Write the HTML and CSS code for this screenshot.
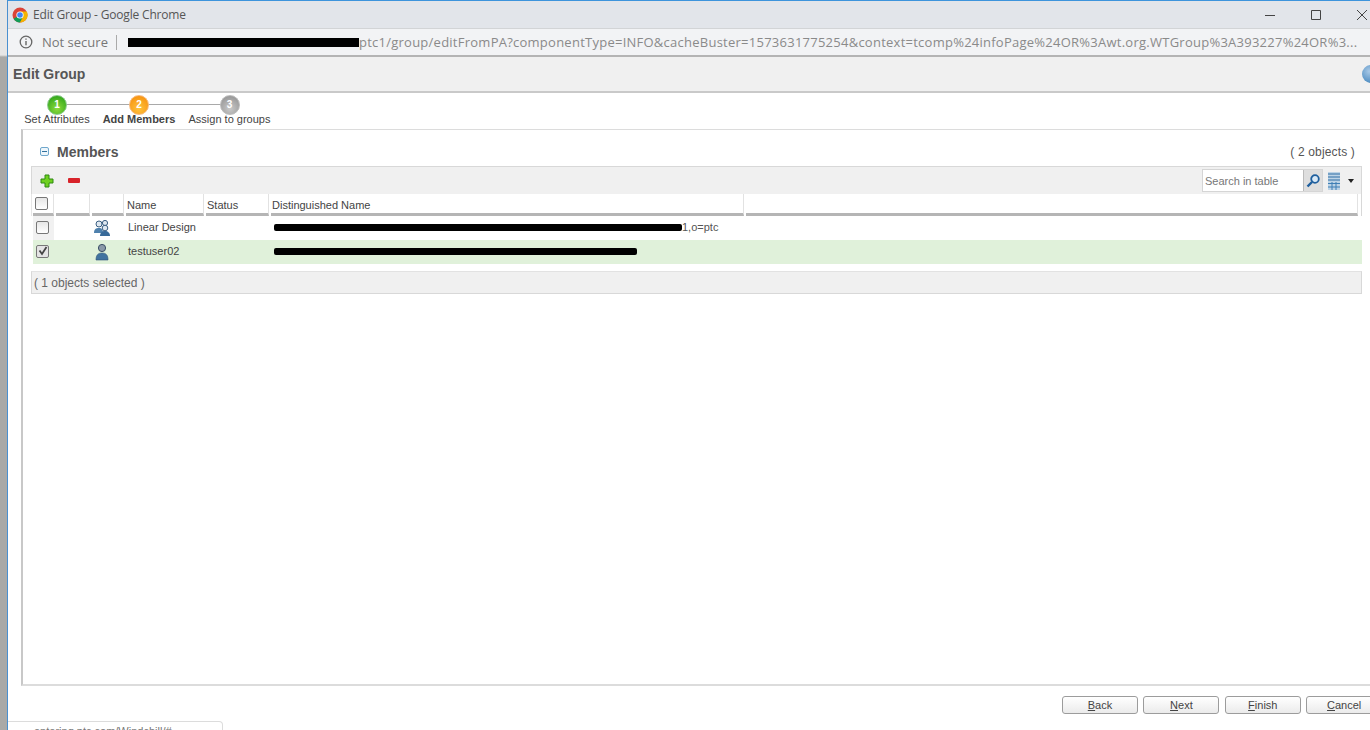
FILE: index.html
```html
<!DOCTYPE html>
<html lang="en">
<head>
<meta charset="utf-8">
<title>Edit Group - Google Chrome</title>
<link rel="stylesheet" href="styles.css">
</head>
<body>
<div class="desk">
  <div class="strip"></div>
  <div class="window">
    <header class="titlebar">
      <svg class="chrome" width="16" height="16" viewBox="0 0 16 16">
        <circle cx="8" cy="8" r="7.5" fill="#db4437"/>
        <path d="M8 8 1.5 11.8A7.5 7.5 0 0 0 8 15.5L11.6 9Z" fill="#0f9d58"/>
        <path d="M8 4.5h6.8A7.5 7.5 0 0 1 8 15.5L11.2 9.6Z" fill="#f4b400"/>
        <circle cx="8" cy="8" r="3.6" fill="#fff"/>
        <circle cx="8" cy="8" r="2.8" fill="#4285f4"/>
      </svg>
      <span class="wintitle">Edit Group - Google Chrome</span>
      <div class="winctrls">
        <svg width="12" height="12" viewBox="0 0 12 12"><path d="M1 6.5h10" stroke="#444" fill="none"/></svg>
        <svg width="12" height="12" viewBox="0 0 12 12"><path d="M1.5 1.5h9v9h-9z" stroke="#444" fill="none"/></svg>
        <svg width="12" height="12" viewBox="0 0 12 12"><path d="M1 1l10 10M11 1 1 11" stroke="#444" fill="none"/></svg>
      </div>
    </header>
    <div class="addrbar">
      <svg class="info" width="14" height="14" viewBox="0 0 14 14"><circle cx="7" cy="7" r="5.8" fill="none" stroke="#666" stroke-width="1.3"/><path d="M7 6v4.2M7 3.6v1.2" stroke="#666" stroke-width="1.4"/></svg>
      <span class="secure">Not secure</span>
      <span class="sep"></span>
      <span class="url"><span class="redact-url"></span><span class="url-text">ptc1/group/editFromPA?componentType=INFO&amp;cacheBuster=1573631775254&amp;context=tcomp%24infoPage%24OR%3Awt.org.WTGroup%3A393227%24OR%3...</span></span>
    </div>
    <div class="pagehead">
      <h1>Edit Group</h1>
      <span class="help"></span>
    </div>
    <nav class="steps">
      <div class="step step1"><span class="dot green">1</span><span class="steplabel">Set Attributes</span></div>
      <div class="step step2"><span class="dot orange">2</span><span class="steplabel current">Add Members</span></div>
      <div class="step step3"><span class="dot grey">3</span><span class="steplabel">Assign to groups</span></div>
      <span class="stepline"></span>
    </nav>
    <main class="panel">
      <div class="panelhead">
        <span class="collapse"></span>
        <h2>Members</h2>
        <span class="count">( 2 objects )</span>
      </div>
      <div class="tablebox">
        <div class="toolbar">
          <svg class="plus" width="14" height="14" viewBox="0 0 14 14"><path d="M5 1h4v4h4v4H9v4H5V9H1V5h4z" fill="#6fd020" stroke="#2f8a12"/></svg>
          <span class="minus"></span>
          <div class="search">
            <span class="searchinput">Search in table</span>
            <span class="searchbtn"><svg width="16" height="16" viewBox="0 0 16 16"><circle cx="10" cy="6" r="3.8" fill="#d9e9f6" stroke="#1f5f9e" stroke-width="1.8"/><path d="M7 9l-4.5 4.5" stroke="#1f5f9e" stroke-width="2.4"/></svg></span>
          </div>
          <svg class="cols" width="12" height="18" viewBox="0 0 12 18"><path d="M0 0h12v18H0z" fill="#bcd3e6"/><path d="M0 2h12M0 5h12M0 8h12" stroke="#2f6ea3" stroke-width="1.2"/><path d="M0 11.5h12M0 15h12M4 10v8M8 10v8" stroke="#3f7fb5"/></svg>
          <span class="caret"></span>
        </div>
        <div class="row headrow">
          <div class="cell c1"><span class="check"></span></div>
          <div class="cell c2"></div>
          <div class="cell c3"></div>
          <div class="cell c4">Name</div>
          <div class="cell c5">Status</div>
          <div class="cell c6">Distinguished Name</div>
          <div class="cell c7"></div>
        </div>
        <div class="row datarow">
          <div class="cell c1 tick"><span class="check"></span></div>
          <div class="cell c2"></div>
          <div class="cell c3">
            <svg width="18" height="18" viewBox="0 0 18 18"><circle cx="6" cy="5" r="3" fill="#dfe8f0" stroke="#3b5f82"/><circle cx="12" cy="4" r="2.6" fill="#dfe8f0" stroke="#3b5f82"/><path d="M1 14c0-4 2-5 5-5s4 2 4 5z" fill="#4f81ad"/><circle cx="12" cy="9" r="2.8" fill="#dfe8f0" stroke="#3b5f82"/><path d="M7 17c0-3 2-5 5-5s5 2 5 5z" fill="#386a99"/></svg>
          </div>
          <div class="cell c4">Linear Design</div>
          <div class="cell c5"></div>
          <div class="cell c6 dn"><span class="redact r1"></span><span>1,o=ptc</span></div>
        </div>
        <div class="row datarow selected">
          <div class="cell c1"><span class="check on"><svg width="10" height="10" viewBox="0 0 10 10"><path d="M1.5 4.5 4 8l4.5-7" fill="none" stroke="#444" stroke-width="1.8"/></svg></span></div>
          <div class="cell c2"></div>
          <div class="cell c3">
            <svg width="14" height="18" viewBox="0 0 14 18"><circle cx="7" cy="5" r="3.6" fill="#8b99a8" stroke="#3b4f66"/><path d="M1 17c0-5 2-7 6-7s6 2 6 7z" fill="#41739f" stroke="#2d5275" stroke-width=".6"/></svg>
          </div>
          <div class="cell c4">testuser02</div>
          <div class="cell c5"></div>
          <div class="cell c6 dn"><span class="redact r2"></span></div>
        </div>
        <div class="tablefoot">( 1 objects selected )</div>
      </div>
    </main>
    <footer class="actions">
      <button class="btn"><u>B</u>ack</button>
      <button class="btn"><u>N</u>ext</button>
      <button class="btn"><u>F</u>inish</button>
      <button class="btn"><u>C</u>ancel</button>
    </footer>
    <div class="statusbubble">entering.ptc.com/Windchill/#</div>
  </div>
</div>
</body>
</html>
```

FILE: styles.css
```css
* { box-sizing: border-box; }
html, body { margin: 0; padding: 0; height: 730px; overflow: hidden; }
body { font-family: "Liberation Sans", Arial, sans-serif; font-size: 11px; color: #333; background: #fff; }
.desk { display: flex; width: 1370px; height: 730px; overflow: hidden; }
.strip { width: 7px; flex: none; background: linear-gradient(#e6e6e6 0, #e6e6e6 55px, #a9a9a7 57px); }
.window { position: relative; flex: 1; min-width: 0; height: 730px; border-left: 1px solid #4a90d0; border-top: 1px solid #3d94dc; background: #fff; }

.titlebar { display: flex; align-items: center; height: 27px; padding-left: 4px; background: #e2e5ea; }
.chrome { flex: none; }
.wintitle { margin-left: 5px; font: 12px "Open Sans", sans-serif; letter-spacing: -.18px; color: #555; }
.winctrls { display: flex; align-items: center; gap: 34px; margin-left: auto; margin-right: 2px; }

.addrbar { display: flex; align-items: center; height: 29px; padding-left: 11px; background: #f2f3f5; border-top: 1px solid #d2d4d6; border-bottom: 2px solid #b4b4b4; white-space: nowrap; overflow: hidden; }
.secure { margin-left: 9px; font: 13px "Open Sans", sans-serif; color: #777; }
.sep { width: 1px; height: 15px; margin: 0 11px 0 8px; background: #aaa; }
.url { display: flex; align-items: center; font: 13px "Open Sans", sans-serif; color: #8a8a8a; }
.redact-url { width: 231px; height: 9px; background: #000; }
.url-text { letter-spacing: .25px; }

.pagehead { display: flex; align-items: center; height: 36px; padding-left: 5px; background: #f0f0f0; border-bottom: 2px solid #c9c9c9; }
.pagehead h1 { margin: 0; font-size: 14px; font-weight: bold; color: #565656; }
.help { width: 18px; height: 18px; margin-left: auto; margin-right: -10px; border-radius: 50%; background: radial-gradient(circle at 40% 35%, #a9c9e6, #2f78b5); }

.steps { position: relative; display: flex; height: 36px; }
.step { display: flex; flex-direction: column; align-items: center; position: relative; z-index: 1; }
.step1 { margin-left: 16px; width: 66px; }
.step2 { margin-left: 13px; width: 72px; }
.step3 { margin-left: 14px; width: 81px; }
.dot { width: 20px; height: 20px; margin-top: 2px; border-radius: 50%; color: #fff; font-size: 10px; font-weight: bold; line-height: 18px; text-align: center; border: 1px solid #bbb; }
.green { background: radial-gradient(circle at 50% 70%, #8ddc3e, #1f9b14); border-color: #8ac98a; }
.orange { background: radial-gradient(circle at 50% 70%, #ffc23d, #f58a07); border-color: #f7b97b; }
.grey { background: radial-gradient(circle at 50% 70%, #c9c9c9, #8c8c8c); }
.steplabel { margin-top: -2px; font-size: 11px; line-height: 13px; white-space: nowrap; color: #444; }
.current { font-weight: bold; }
.stepline { position: absolute; left: 49px; top: 11px; width: 172px; height: 1px; background: #a9a9a9; }

.panel { height: 557px; margin-left: 13px; padding: 0 0 0 8px; border-left: 2px solid #c8c8c8; border-top: 1px solid #dcdcdc; border-bottom: 2px solid #dcdcdc; }
.panelhead { display: flex; align-items: center; height: 36px; padding: 7px 15px 0 9px; }
.collapse { position: relative; width: 9px; height: 9px; border: 1px solid #6fa7cc; border-radius: 2px; background: #eef6fb; }
.collapse::after { content: ""; position: absolute; left: 1px; right: 1px; top: 3px; height: 1px; background: #31719e; }
.panelhead h2 { margin: 0 0 0 8px; font-size: 14px; font-weight: bold; color: #555; }
.count { margin-left: auto; font-size: 12px; color: #555; letter-spacing: .15px; }

.tablebox { width: 1331px; }
.toolbar { display: flex; align-items: center; height: 28px; padding-left: 8px; background: #f0f0f0; border: 1px solid #d8d8d8; border-bottom: 0; }
.plus { flex: none; }
.minus { width: 12px; height: 5px; margin-left: 14px; border-radius: 1px; background: #d8232a; }
.search { display: flex; align-items: center; height: 23px; margin-left: auto; border: 1px solid #d5d5d5; background: #fff; }
.searchinput { width: 100px; padding-left: 2px; font-size: 11px; color: #777; }
.searchbtn { display: flex; align-items: center; justify-content: center; width: 19px; height: 21px; border-left: 1px solid #bbb; background: #dedede; }
.cols { margin-left: 5px; flex: none; }
.caret { width: 0; height: 0; margin: 0 7px 0 8px; border-left: 3.5px solid transparent; border-right: 3.5px solid transparent; border-top: 4px solid #222; }

.row { display: flex; }
.headrow { height: 22px; padding-left: 1px; border-right: 1px solid #d8d8d8; border-left: 1px solid #e6e6e6; }
.headrow .cell { height: 22px; margin-right: 2px; padding: 3px 0 0 1px; border-bottom: 3px solid #b5b5b5; font-size: 11px; color: #444; line-height: 16px; border-right: 1px solid #e2e2e2; }
.headrow .c7 { flex: 1; margin-right: 3px; }
.c1 { width: 21px; flex: none; }
.c2 { width: 34px; flex: none; }
.c3 { width: 32px; flex: none; }
.c4 { width: 78px; flex: none; }
.c5 { width: 63px; flex: none; }
.c6 { width: 473px; flex: none; }
.headrow .c1 { padding-left: 0; }
.headrow .check { margin-left: 2px; }

.datarow { align-items: center; height: 24px; margin-left: 2px; font-size: 11px; color: #444; }
.datarow .cell { display: flex; align-items: center; height: 100%; margin-right: 2px; padding-left: 2px; padding-bottom: 2px; }
.datarow .c1 { padding-left: 0; }
.datarow .c3 { justify-content: center; padding: 0 12px 0 0; }
.tick { background: #f1f1f1; }
.selected { background: #e0f1da; }
.check { display: flex; align-items: center; justify-content: center; width: 13px; height: 13px; margin-left: 3px; border: 1px solid #777; border-radius: 2px; background: linear-gradient(#e6e6e6, #fff); }
.on { background: #e4e4e4; }
.dn { white-space: nowrap; }
.redact { display: block; height: 7px; background: #000; border-radius: 2px; margin-left: 1px; }
.r1 { width: 408px; }
.r2 { width: 363px; }
.dn span:last-child { color: #555; }

.tablefoot { display: flex; align-items: center; height: 23px; margin-top: 7px; padding: 1px 0 0 2px; background: #f0f0f0; border: 1px solid #d8d8d8; border-top: 1px solid #e2e2e2; font-size: 12px; color: #666; }

.actions { display: flex; gap: 5.4px; padding: 10px 0 0 1054px; width: 1400px; }
.btn { width: 76px; height: 18px; padding: 0; flex: none; border: 1px solid #9c9c9c; border-radius: 3px; background: linear-gradient(#fff, #ebebeb); font: 11px "Liberation Sans", Arial, sans-serif; color: #444; }

.statusbubble { position: absolute; left: 0; top: 720px; width: 215px; height: 12px; padding: 3px 0 0 26px; background: #fff; border: 1px solid #dcdcdc; border-left: 0; border-radius: 0 4px 0 0; font-size: 11px; line-height: 13px; color: #777; overflow: hidden; white-space: nowrap; }
```
